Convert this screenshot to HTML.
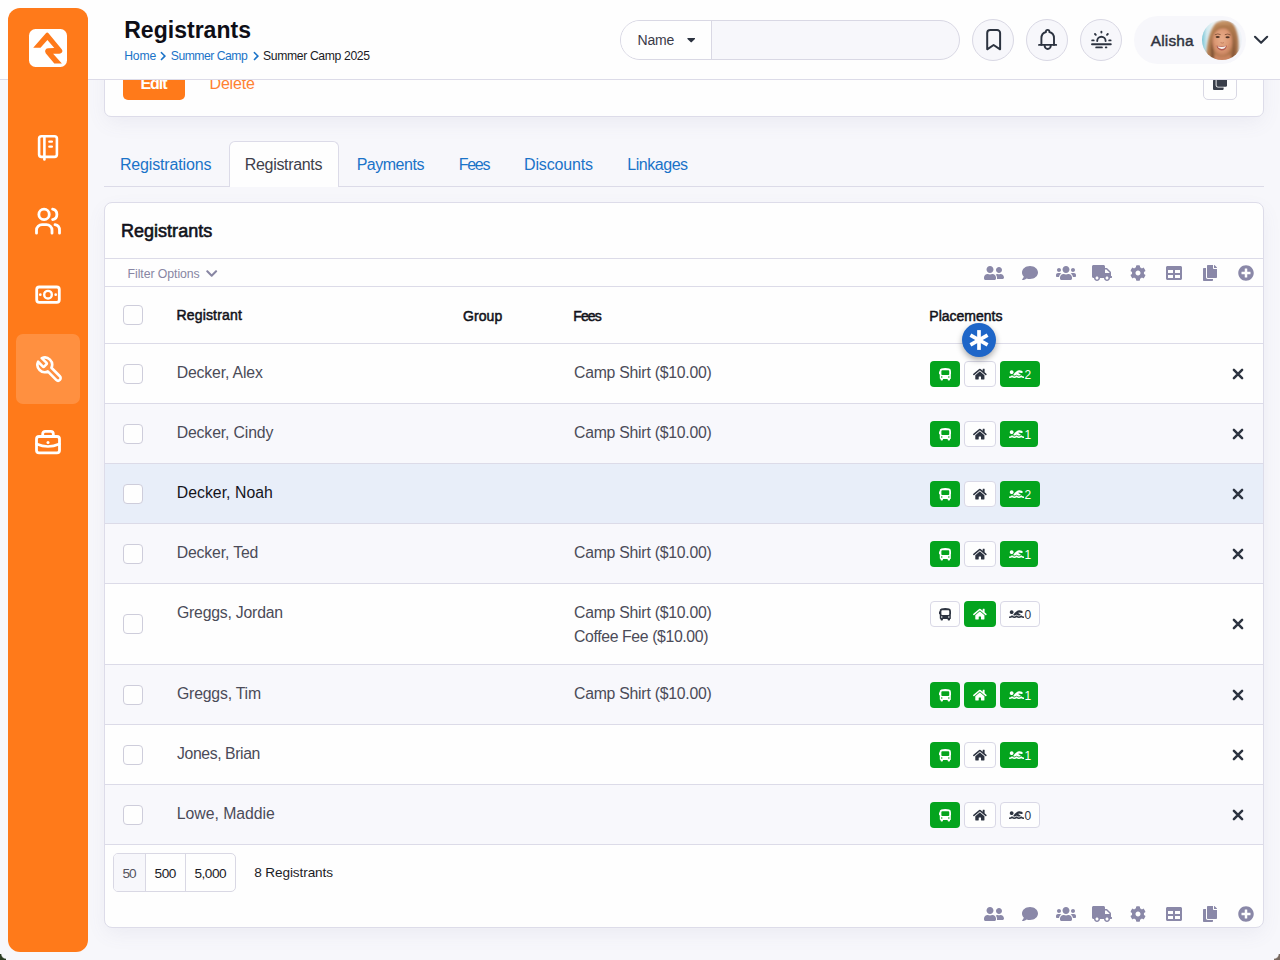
<!DOCTYPE html>
<html>
<head>
<meta charset="utf-8">
<title>Registrants</title>
<style>
*{box-sizing:border-box;margin:0;padding:0}
html,body{width:1280px;height:960px;overflow:hidden}
body{background:#f7f7fb;font-family:"Liberation Sans",sans-serif;color:#3b3b45;position:relative}
.abs{position:absolute;display:block}
.t{position:absolute;white-space:nowrap}
.hl{position:absolute;left:105px;width:1158px;height:1px;background:#dcdbe8}
.cb{position:absolute;left:123px;width:20px;height:20px;border:1.5px solid #cecddb;border-radius:4px;background:#fefefe}
.pb{position:absolute;height:26px;border-radius:4px}
.pb.g{background:#04a41e}
.pb.w{background:#fefefe;border:1px solid #d9d8e6}
.circ{position:absolute;width:42px;height:42px;border-radius:50%;background:#f7f7fb;border:1px solid #d9d8e4}
</style>
</head>
<body>
<div class="abs" style="left:104px;top:40px;width:1160px;height:77px;background:#fefefe;border:1px solid #dddce9;border-radius:7px;box-shadow:0 7px 20px -2px rgba(100,100,150,.085)"></div>
<div class="abs" style="left:123px;top:62px;width:62px;height:38px;background:#ff7a1a;border-radius:5px"></div>
<div class="abs" style="left:0;top:80px;width:1280px;height:40px;overflow:hidden"><div class="t" style="left:140.40px;top:-4px;font-size:16px;line-height:16px;color:#fff;letter-spacing:-1.030px;font-weight:700">Edit</div>
<div class="t" style="left:209.50px;top:-4px;font-size:16px;line-height:16px;color:#ff8132;letter-spacing:-0.170px">Delete</div></div>
<div class="abs" style="left:1203px;top:66px;width:34px;height:34px;background:#fefefe;border:1px solid #d9d8e4;border-radius:5px"></div>
<svg class="abs" style="left:1213.00px;top:75.80px" width="14.20" height="14.20" viewBox="0 0 512 512"><path fill="#3a3f4a" d="M464 0c26.510 0 48 21.490 48 48v288c0 26.510-21.490 48-48 48H176c-26.510 0-48-21.490-48-48V48c0-26.510 21.490-48 48-48h288M176 416c-44.112 0-80-35.888-80-80V128H48c-26.510 0-48 21.490-48 48v288c0 26.510 21.490 48 48 48h288c26.510 0 48-21.490 48-48v-48H176z"/></svg>
<div class="abs" style="left:0;top:0;width:1280px;height:79px;background:#fefefe"></div>
<div class="abs" style="left:0;top:79px;width:1280px;height:1px;background:#dcdbe8"></div>
<svg class="abs" style="left:160.21px;top:50.80px" width="6.38" height="10.20" viewBox="0 0 320 512"><path fill="#1a73c8" d="M285.476 272.971L91.132 467.314c-9.373 9.373-24.569 9.373-33.941 0l-22.667-22.667c-9.357-9.357-9.375-24.522-.04-33.901L188.505 256 34.484 101.255c-9.335-9.379-9.317-24.544.04-33.901l22.667-22.667c9.373-9.373 24.569-9.373 33.941 0L285.475 239.030c9.373 9.372 9.373 24.568.001 33.941z"/></svg>
<svg class="abs" style="left:252.71px;top:50.80px" width="6.38" height="10.20" viewBox="0 0 320 512"><path fill="#1a73c8" d="M285.476 272.971L91.132 467.314c-9.373 9.373-24.569 9.373-33.941 0l-22.667-22.667c-9.357-9.357-9.375-24.522-.04-33.901L188.505 256 34.484 101.255c-9.335-9.379-9.317-24.544.04-33.901l22.667-22.667c9.373-9.373 24.569-9.373 33.941 0L285.475 239.030c9.373 9.372 9.373 24.568.001 33.941z"/></svg>
<div class="abs" style="left:620px;top:20px;width:340px;height:40px;border-radius:20px;background:#f7f7fb;border:1px solid #d9d8e4;overflow:hidden"><div style="position:absolute;left:0;top:0;width:91px;height:38px;background:#fefefe;border-right:1px solid #d9d8e4"></div></div>
<svg class="abs" style="left:686.58px;top:33.45px" width="8.44" height="13.50" viewBox="0 0 320 512"><path fill="#2c3340" d="M31.3 192h257.3c17.800 0 26.700 21.500 14.100 34.100L174.100 354.800c-7.800 7.800-20.500 7.800-28.300 0L17.200 226.100C4.600 213.500 13.500 192 31.300 192z"/></svg>
<div class="circ" style="left:972px;top:19px"></div>
<div class="circ" style="left:1026px;top:19px"></div>
<div class="circ" style="left:1080px;top:19px"></div>
<svg class="abs" style="left:973px;top:20px" width="40" height="40" viewBox="973 20 40 40"><path fill="none" stroke="#2c3340" stroke-linecap="round" stroke-linejoin="round" stroke-width="2" d="M987.200,49.300V33a3,3 0 0 1 3,-3h6.900a3,3 0 0 1 3,3V49.300L993.600,45.000Z"/></svg>
<svg class="abs" style="left:1027px;top:20px" width="40" height="40" viewBox="1027 20 40 40"><g fill="none" stroke="#2c3340" stroke-linecap="round" stroke-linejoin="round" stroke-width="1.9"><path d="M1039.000,44.900H1056.200"/><path d="M1041.4,44.900V38.300C1041.400,35.000 1043.100,32.700 1045.900,32.000C1045.800,30.600 1046.500,29.900 1047.650,29.900C1048.800,29.900 1049.500,30.600 1049.400,32.000C1052.300,32.700 1054.000,35.000 1054.000,38.300V44.900"/><path d="M1044.600,45.400a3.100,3.600 0 0 0 6.200,0"/></g></svg>
<svg class="abs" style="left:1081px;top:20px" width="40" height="40" viewBox="1081 20 40 40"><g fill="none" stroke="#2c3340" stroke-linecap="round" stroke-linejoin="round" stroke-width="1.9"><path d="M1092.000,44.300H1110.800"/><path d="M1096.200,47.400H1101.900M1105.800,47.400H1106.400"/><path d="M1097.200,41.000a4.200,4.200 0 0 1 8.400,0"/><path d="M1101.400,31.600V32.600M1095.000,34.000L1095.800,34.800M1107.800,34.000L1107.000,34.800M1092.200,40.400H1093.700M1109.200,40.400H1110.600"/></g></svg>
<div class="abs" style="left:1134px;top:16px;width:111.500px;height:48px;border-radius:24px;background:#f7f7fb"></div>
<svg class="abs" style="left:1202px;top:20px" width="40" height="40" viewBox="0 0 40 40">
<defs><clipPath id="avc"><circle cx="20" cy="20" r="20"/></clipPath>
<filter id="b1" x="-30%" y="-30%" width="160%" height="160%"><feGaussianBlur stdDeviation="0.9"/></filter>
<filter id="b2" x="-30%" y="-30%" width="160%" height="160%"><feGaussianBlur stdDeviation="0.45"/></filter>
<linearGradient id="bgav" x1="0" x2="1"><stop offset="0" stop-color="#7cc6d6"/><stop offset=".12" stop-color="#cfe8ee"/><stop offset=".3" stop-color="#eef4f6"/><stop offset="1" stop-color="#eef3f8"/></linearGradient>
<radialGradient id="skin" cx=".48" cy=".42" r=".62"><stop offset="0" stop-color="#e8ad8b"/><stop offset=".6" stop-color="#dc9873"/><stop offset="1" stop-color="#c27c58"/></radialGradient>
<linearGradient id="hair" x1="0" x2="1" y1="0" y2="1"><stop offset="0" stop-color="#c08e60"/><stop offset=".5" stop-color="#b07a4e"/><stop offset="1" stop-color="#a06a43"/></linearGradient>
</defs>
<g clip-path="url(#avc)">
<rect width="40" height="40" fill="url(#bgav)"/>
<g filter="url(#b1)">
<path d="M4,42 C4,30 6,12 13,4 C17,0 26,-1 30,3 C35,8 37,18 36.500,28 C36.300,33 35,38 33,42 Z" fill="url(#hair)"/>
<path d="M9.500,40 C8,30 9,18 12,11 C10.500,20 11,32 13,40Z" fill="#7d4f33"/>
<path d="M32,38 C33.500,30 33,18 30,11 C32,20 31.500,30 29.500,38Z" fill="#7d4f33"/>
<ellipse cx="20.300" cy="21.500" rx="10" ry="14" fill="url(#skin)"/>
<path d="M11,42 L13,34 Q20,39 28,34 L30,42Z" fill="#c9835f"/>
<path d="M10,19 C10.500,9 16,6 21.500,6.500 C27,6.500 31,11 31,20 C29.500,12 26,8.800 22.500,8.500 C17,8.000 12,11 10,19Z" fill="#aa7449"/>
<path d="M14,4.500 C18,1.500 26,1.500 29.500,5 C25,3.500 18,3.300 14,4.500Z" fill="#cf9f70"/>
</g>
<g filter="url(#b2)">
<path d="M14.400,25.600 Q19.800,27.600 25.000,25.400 Q24.000,30.300 19.600,30.500 Q15.600,30.300 14.400,25.600Z" fill="#b0584f"/>
<path d="M15.400,26.200 Q19.800,27.800 24.000,26.000 Q23.000,28.900 19.700,29.000 Q16.500,28.900 15.400,26.200Z" fill="#f7f1ee"/>
<ellipse cx="15.700" cy="17.000" rx="2.100" ry="1.000" fill="#4f3225"/>
<ellipse cx="25.600" cy="17.200" rx="2.100" ry="1.000" fill="#4f3225"/>
<path d="M12.800,14.800 Q15.800,13.200 18.600,14.600" stroke="#81523a" stroke-width=".9" fill="none"/>
<path d="M22.800,14.700 Q25.800,13.300 28.600,15.000" stroke="#81523a" stroke-width=".9" fill="none"/>
<path d="M18.600,22.600 Q20.300,23.600 22.000,22.600" stroke="#c07d5c" stroke-width=".9" fill="none"/>
<path d="M12.300,23.500 Q13.300,26.500 14.300,28.000" stroke="#cf8a68" stroke-width=".7" fill="none"/>
<path d="M27.600,23.500 Q26.800,26.500 25.600,28.000" stroke="#cf8a68" stroke-width=".7" fill="none"/>
</g>
</g></svg>
<svg class="abs" style="left:1250px;top:30px" width="22" height="20" viewBox="1250 30 22 20"><path fill="none" stroke="#2c3340" stroke-linecap="round" stroke-linejoin="round" stroke-width="2.1" d="M1255.000,36.800L1261.100,42.800L1267.200,36.800"/></svg>
<div class="abs" style="left:8px;top:8px;width:80px;height:944px;background:#ff7a1a;border-radius:12px"></div>
<div class="abs" style="left:29px;top:29px;width:38px;height:38px;background:#fff;border-radius:6.5px"></div>
<svg class="abs" style="left:29px;top:29px" width="38" height="38" viewBox="0 0 38 38"><path fill="#ff7a1a" d="M16.9,4.3 Q18.2,2.8 19.5,4.3 L32.7,20.3 Q34.3,22.6 32.3,24.1 Q31.4,24.7 30.2,24.7 L24.1,24.7 L32.9,34.4 L25.3,34.4 L16.7,24.3 Q15.2,22 17,20.1 Q17.9,19.3 19.2,19.3 L25.3,19.1 L18.4,10.9 L11.5,18.7 L4.2,18.7 Z"/></svg>
<div class="abs" style="left:16px;top:334px;width:64px;height:70px;background:rgba(255,255,255,.17);border-radius:7px"></div>
<svg class="abs" style="left:28px;top:127px" width="40" height="40" viewBox="28 127 40 40"><g fill="none" stroke="#fff" stroke-linecap="round" stroke-linejoin="round" stroke-width="2.6"><rect x="39.1" y="136.2" width="17.8" height="20.7" rx="2.4"/><path d="M44.4,136.4V159.4"/><path d="M49.3,141.7H51.9M49.3,146.7H51.9" stroke-width="2.3"/></g></svg>
<svg class="abs" style="left:28px;top:200px" width="40" height="40" viewBox="28 200 40 40"><g fill="none" stroke="#fff" stroke-linecap="round" stroke-linejoin="round" stroke-width="2.8"><circle cx="44.05" cy="214.4" r="5.2"/><path d="M52.6,209.2a5.3,5.3 0 0 1 0,10.4"/><path d="M36.5,233.2v-2.9a5.6,5.6 0 0 1 5.6,-5.6h4.3a5.6,5.6 0 0 1 5.6,5.600v2.900"/><path d="M55.000,224.700a5.600,5.600 0 0 1 4.500,5.500v3.000"/></g></svg>
<svg class="abs" style="left:28px;top:275px" width="40" height="40" viewBox="28 275 40 40"><g fill="none" stroke="#fff" stroke-linecap="round" stroke-linejoin="round" stroke-width="2.8"><rect x="36.7" y="287" width="22.6" height="15.3" rx="2.6"/><circle cx="48" cy="294.65" r="3.8" stroke-width="2.4"/></g><circle cx="40.3" cy="294.65" r="1.35" fill="#fff"/><circle cx="55.7" cy="294.65" r="1.35" fill="#fff"/></svg>
<svg class="abs" style="left:34.5px;top:354.8px" width="29.3" height="29.3" viewBox="0 0 24 24"><g transform="translate(24,0) scale(-1,1)"><path fill="none" stroke="#fff" stroke-linecap="round" stroke-linejoin="round" stroke-width="2.15" d="M14.7 6.3a1 1 0 0 0 0 1.4l1.6 1.6a1 1 0 0 0 1.4 0l3.770-3.770a6 6 0 0 1-7.940 7.940l-6.910 6.910a2.120 2.120 0 0 1-3-3l6.910-6.910a6 6 0 0 1 7.940-7.940l-3.760 3.760z"/></g></svg>
<svg class="abs" style="left:28px;top:422px" width="40" height="40" viewBox="28 422 40 40"><g fill="none" stroke="#fff" stroke-linecap="round" stroke-linejoin="round" stroke-width="2.8"><rect x="36.5" y="436.5" width="23" height="16.4" rx="2.6"/><path d="M42.700,436.500v-2.600a2.600,2.600 0 0 1 2.600,-2.600h5.400a2.600,2.600 0 0 1 2.600,2.600v2.600"/><path d="M36.600,444.000q11.400,5.000 22.800,0" stroke-width="2.5"/></g><circle cx="48" cy="442.6" r="1.5" fill="#fff"/></svg>
<div class="abs" style="left:104px;top:186px;width:1160px;height:1px;background:#dcdbe8"></div>
<div class="abs" style="left:229px;top:141px;width:110px;height:46px;background:#fefefe;border:1px solid #dcdbe8;border-bottom:none;border-radius:6px 6px 0 0"></div>
<div class="abs" style="left:104px;top:202px;width:1160px;height:726px;background:#fefefe;border:1px solid #dddce9;border-radius:8px;box-shadow:0 7px 20px -2px rgba(100,100,150,.085)"></div>
<div class="abs" style="left:105px;top:404px;width:1158px;height:59px;background:#f8f8fc"></div>
<div class="abs" style="left:105px;top:464px;width:1158px;height:59px;background:#e8eef9"></div>
<div class="abs" style="left:105px;top:524px;width:1158px;height:59px;background:#f8f8fc"></div>
<div class="abs" style="left:105px;top:665px;width:1158px;height:59px;background:#f8f8fc"></div>
<div class="abs" style="left:105px;top:785px;width:1158px;height:59px;background:#f8f8fc"></div>
<div class="hl" style="top:258px"></div>
<div class="hl" style="top:286px"></div>
<div class="hl" style="top:343px"></div>
<div class="hl" style="top:403px"></div>
<div class="hl" style="top:463px"></div>
<div class="hl" style="top:523px"></div>
<div class="hl" style="top:583px"></div>
<div class="hl" style="top:664px"></div>
<div class="hl" style="top:724px"></div>
<div class="hl" style="top:784px"></div>
<div class="hl" style="top:844px"></div>
<svg class="abs" style="left:206.41px;top:267.20px" width="11.38" height="13.00" viewBox="0 0 448 512"><path fill="#8886a3" d="M207.029 381.476L12.686 187.132c-9.373-9.373-9.373-24.569 0-33.941l22.667-22.667c9.357-9.357 24.522-9.375 33.901-.04L224 284.505l154.745-154.021c9.379-9.335 24.544-9.317 33.901.04l22.667 22.667c9.373 9.373 9.373 24.569 0 33.941L240.971 381.476c-9.373 9.372-24.569 9.372-33.942 0z"/></svg>
<svg class="abs" style="left:984.00px;top:265.00px" width="20.00" height="16.00" viewBox="0 0 640 512"><path fill="#8a88a8" d="M192 256c61.9 0 112-50.1 112-112S253.9 32 192 32 80 82.1 80 144s50.1 112 112 112zm76.8 32h-8.3c-20.8 10-43.9 16-68.5 16s-47.6-6-68.5-16h-8.3C51.6 288 0 339.6 0 403.2V432c0 26.5 21.5 48 48 48h288c26.5 0 48-21.5 48-48v-28.8c0-63.6-51.6-115.2-115.2-115.2zM480 256c53 0 96-43 96-96s-43-96-96-96-96 43-96 96 43 96 96 96zm48 32h-3.8c-13.9 4.8-28.6 8-44.2 8s-30.3-3.2-44.2-8H432c-20.4 0-39.2 5.9-55.7 15.4 24.4 26.3 39.7 61.2 39.7 99.8v38.4c0 2.2-.5 4.3-.6 6.4H592c26.5 0 48-21.5 48-48 0-61.9-50.1-112-112-112z"/></svg>
<svg class="abs" style="left:1022.00px;top:265.00px" width="16.00" height="16.00" viewBox="0 0 512 512"><path fill="#8a88a8" d="M256 32C114.6 32 0 125.1 0 240c0 49.6 21.4 95 57 130.7C44.5 421.1 2.7 466 2.2 466.5c-2.2 2.3-2.8 5.7-1.5 8.7S4.8 480 8 480c66.3 0 116-31.8 140.6-51.4 32.7 12.3 69 19.4 107.4 19.4 141.4 0 256-93.1 256-208S397.4 32 256 32z"/></svg>
<svg class="abs" style="left:1056.00px;top:265.00px" width="20.00" height="16.00" viewBox="0 0 640 512"><path fill="#8a88a8" d="M96 224c35.3 0 64-28.7 64-64s-28.7-64-64-64-64 28.7-64 64 28.7 64 64 64zm448 0c35.3 0 64-28.7 64-64s-28.7-64-64-64-64 28.7-64 64 28.7 64 64 64zm32 32h-64c-17.6 0-33.5 7.1-45.1 18.6 40.3 22.1 68.9 62 75.1 109.4h66c17.7 0 32-14.3 32-32v-32c0-35.3-28.7-64-64-64zm-256 0c61.9 0 112-50.1 112-112S381.9 32 320 32 208 82.1 208 144s50.1 112 112 112zm76.8 32h-8.3c-20.8 10-43.900 16-68.500 16s-47.600-6-68.500-16h-8.300C179.600 288 128 339.600 128 403.200V432c0 26.500 21.500 48 48 48h288c26.500 0 48-21.500 48-48v-28.800c0-63.600-51.600-115.200-115.200-115.200zm-223.700-13.400C161.500 263.100 145.600 256 128 256H64c-35.300 0-64 28.700-64 64v32c0 17.700 14.300 32 32 32h65.900c6.300-47.400 34.900-87.300 75.200-109.400z"/></svg>
<svg class="abs" style="left:1092.00px;top:265.00px" width="20.00" height="16.00" viewBox="0 0 640 512"><path fill="#8a88a8" d="M624 352h-16V243.900c0-12.700-5.100-24.900-14.100-33.900L494 110.100c-9-9-21.200-14.100-33.900-14.100H416V48c0-26.500-21.500-48-48-48H48C21.500 0 0 21.500 0 48v320c0 26.500 21.500 48 48 48h16c0 53 43 96 96 96s96-43 96-96h128c0 53 43 96 96 96s96-43 96-96h48c8.800 0 16-7.200 16-16v-32c0-8.800-7.200-16-16-16zM160 464c-26.500 0-48-21.500-48-48s21.500-48 48-48 48 21.500 48 48-21.500 48-48 48zm320 0c-26.500 0-48-21.500-48-48s21.500-48 48-48 48 21.500 48 48-21.500 48-48 48zm80-208H416V144h44.100l99.900 99.900V256z"/></svg>
<svg class="abs" style="left:1130.00px;top:265.00px" width="16.00" height="16.00" viewBox="0 0 512 512"><path fill="#8a88a8" d="M487.4 315.7l-42.600-24.600c4.300-23.200 4.300-47 0-70.200l42.600-24.600c4.900-2.800 7.100-8.600 5.500-14-11.100-35.600-30-67.800-54.700-94.600-3.800-4.100-10-5.100-14.800-2.300L380.800 110c-17.900-15.400-38.500-27.300-60.800-35.100V25.800c0-5.600-3.900-10.500-9.400-11.700-36.700-8.200-74.300-7.800-109.200 0-5.500 1.200-9.400 6.100-9.400 11.700V75c-22.200 7.900-42.800 19.800-60.800 35.100L88.700 85.500c-4.900-2.800-11-1.900-14.800 2.300-24.700 26.700-43.600 58.900-54.700 94.600-1.700 5.400.6 11.200 5.500 14L67.300 221c-4.300 23.200-4.300 47 0 70.200l-42.600 24.600c-4.900 2.800-7.100 8.600-5.500 14 11.100 35.600 30 67.800 54.700 94.600 3.800 4.100 10 5.100 14.800 2.300l42.600-24.600c17.900 15.400 38.500 27.300 60.800 35.100v49.200c0 5.600 3.900 10.500 9.400 11.700 36.700 8.200 74.300 7.800 109.200 0 5.500-1.200 9.400-6.100 9.400-11.700v-49.200c22.200-7.900 42.800-19.800 60.800-35.100l42.600 24.600c4.900 2.800 11 1.900 14.800-2.300 24.700-26.700 43.600-58.900 54.700-94.600 1.500-5.500-.7-11.300-5.600-14.100zM256 336c-44.100 0-80-35.900-80-80s35.900-80 80-80 80 35.900 80 80-35.900 80-80 80z"/></svg>
<svg class="abs" style="left:1166.00px;top:265.00px" width="16.00" height="16.00" viewBox="0 0 512 512"><path fill="#8a88a8" d="M464 32H48C21.49 32 0 53.49 0 80v352c0 26.51 21.49 48 48 48h416c26.51 0 48-21.49 48-48V80c0-26.510-21.490-48-48-48zM224 416H64v-96h160v96zm0-160H64v-96h160v96zm224 160H288v-96h160v96zm0-160H288v-96h160v96z"/></svg>
<svg class="abs" style="left:1203.00px;top:265.00px" width="14.00" height="16.00" viewBox="0 0 448 512"><path fill="#8a88a8" d="M320 448v40c0 13.255-10.745 24-24 24H24c-13.255 0-24-10.745-24-24V120c0-13.255 10.745-24 24-24h72v296c0 30.879 25.121 56 56 56h168zm0-344V0H152c-13.255 0-24 10.745-24 24v368c0 13.255 10.745 24 24 24h272c13.255 0 24-10.745 24-24V128H344c-13.200 0-24-10.800-24-24zm120.971-31.029L375.029 7.029A24 24 0 0 0 358.059 0H352v96h96v-6.059a24 24 0 0 0-7.029-16.970z"/></svg>
<svg class="abs" style="left:1238.00px;top:265.00px" width="16.00" height="16.00" viewBox="0 0 512 512"><path fill="#8a88a8" d="M256 8C119 8 8 119 8 256s111 248 248 248 248-111 248-248S393 8 256 8zm144 276c0 6.600-5.400 12-12 12h-92v92c0 6.600-5.400 12-12 12h-56c-6.600 0-12-5.400-12-12v-92h-92c-6.600 0-12-5.400-12-12v-56c0-6.600 5.400-12 12-12h92v-92c0-6.600 5.400-12 12-12h56c6.600 0 12 5.400 12 12v92h92c6.600 0 12 5.400 12 12v56z"/></svg>
<svg class="abs" style="left:984.00px;top:906.00px" width="20.00" height="16.00" viewBox="0 0 640 512"><path fill="#8a88a8" d="M192 256c61.9 0 112-50.1 112-112S253.9 32 192 32 80 82.1 80 144s50.1 112 112 112zm76.8 32h-8.3c-20.8 10-43.9 16-68.5 16s-47.6-6-68.5-16h-8.3C51.6 288 0 339.6 0 403.2V432c0 26.5 21.5 48 48 48h288c26.5 0 48-21.5 48-48v-28.8c0-63.6-51.6-115.2-115.2-115.2zM480 256c53 0 96-43 96-96s-43-96-96-96-96 43-96 96 43 96 96 96zm48 32h-3.8c-13.9 4.8-28.6 8-44.2 8s-30.3-3.2-44.2-8H432c-20.4 0-39.2 5.9-55.7 15.4 24.4 26.3 39.7 61.2 39.7 99.8v38.4c0 2.2-.5 4.3-.6 6.4H592c26.5 0 48-21.5 48-48 0-61.9-50.1-112-112-112z"/></svg>
<svg class="abs" style="left:1022.00px;top:906.00px" width="16.00" height="16.00" viewBox="0 0 512 512"><path fill="#8a88a8" d="M256 32C114.6 32 0 125.1 0 240c0 49.6 21.4 95 57 130.7C44.5 421.1 2.7 466 2.2 466.5c-2.2 2.3-2.8 5.7-1.5 8.7S4.8 480 8 480c66.3 0 116-31.8 140.6-51.4 32.7 12.3 69 19.4 107.4 19.4 141.4 0 256-93.1 256-208S397.4 32 256 32z"/></svg>
<svg class="abs" style="left:1056.00px;top:906.00px" width="20.00" height="16.00" viewBox="0 0 640 512"><path fill="#8a88a8" d="M96 224c35.3 0 64-28.7 64-64s-28.7-64-64-64-64 28.7-64 64 28.7 64 64 64zm448 0c35.3 0 64-28.7 64-64s-28.7-64-64-64-64 28.7-64 64 28.7 64 64 64zm32 32h-64c-17.6 0-33.5 7.1-45.1 18.6 40.3 22.1 68.9 62 75.1 109.4h66c17.7 0 32-14.3 32-32v-32c0-35.3-28.7-64-64-64zm-256 0c61.9 0 112-50.1 112-112S381.9 32 320 32 208 82.1 208 144s50.1 112 112 112zm76.8 32h-8.3c-20.8 10-43.900 16-68.500 16s-47.600-6-68.500-16h-8.300C179.600 288 128 339.600 128 403.200V432c0 26.500 21.500 48 48 48h288c26.500 0 48-21.500 48-48v-28.800c0-63.600-51.600-115.200-115.200-115.200zm-223.700-13.400C161.500 263.100 145.600 256 128 256H64c-35.300 0-64 28.700-64 64v32c0 17.700 14.300 32 32 32h65.900c6.300-47.400 34.900-87.300 75.200-109.400z"/></svg>
<svg class="abs" style="left:1092.00px;top:906.00px" width="20.00" height="16.00" viewBox="0 0 640 512"><path fill="#8a88a8" d="M624 352h-16V243.900c0-12.700-5.100-24.900-14.100-33.900L494 110.100c-9-9-21.200-14.100-33.900-14.100H416V48c0-26.500-21.500-48-48-48H48C21.500 0 0 21.500 0 48v320c0 26.500 21.500 48 48 48h16c0 53 43 96 96 96s96-43 96-96h128c0 53 43 96 96 96s96-43 96-96h48c8.800 0 16-7.200 16-16v-32c0-8.800-7.200-16-16-16zM160 464c-26.500 0-48-21.500-48-48s21.500-48 48-48 48 21.500 48 48-21.500 48-48 48zm320 0c-26.500 0-48-21.500-48-48s21.500-48 48-48 48 21.500 48 48-21.500 48-48 48zm80-208H416V144h44.100l99.900 99.900V256z"/></svg>
<svg class="abs" style="left:1130.00px;top:906.00px" width="16.00" height="16.00" viewBox="0 0 512 512"><path fill="#8a88a8" d="M487.4 315.7l-42.600-24.600c4.300-23.200 4.300-47 0-70.200l42.600-24.600c4.900-2.800 7.100-8.600 5.500-14-11.100-35.600-30-67.800-54.700-94.600-3.800-4.100-10-5.100-14.800-2.300L380.800 110c-17.900-15.400-38.500-27.300-60.800-35.100V25.800c0-5.600-3.900-10.500-9.400-11.700-36.700-8.200-74.300-7.800-109.200 0-5.500 1.200-9.400 6.100-9.400 11.700V75c-22.200 7.900-42.800 19.800-60.800 35.100L88.700 85.500c-4.900-2.800-11-1.900-14.800 2.300-24.700 26.700-43.600 58.900-54.700 94.600-1.700 5.400.6 11.200 5.500 14L67.300 221c-4.300 23.200-4.300 47 0 70.200l-42.600 24.600c-4.900 2.800-7.100 8.600-5.500 14 11.100 35.600 30 67.800 54.700 94.600 3.800 4.100 10 5.100 14.800 2.300l42.600-24.600c17.900 15.400 38.500 27.300 60.800 35.100v49.200c0 5.600 3.900 10.500 9.400 11.700 36.700 8.200 74.300 7.800 109.200 0 5.500-1.200 9.400-6.100 9.400-11.700v-49.200c22.200-7.900 42.800-19.800 60.800-35.100l42.600 24.600c4.900 2.800 11 1.900 14.800-2.300 24.700-26.700 43.600-58.900 54.700-94.600 1.500-5.500-.7-11.300-5.600-14.100zM256 336c-44.100 0-80-35.900-80-80s35.900-80 80-80 80 35.900 80 80-35.900 80-80 80z"/></svg>
<svg class="abs" style="left:1166.00px;top:906.00px" width="16.00" height="16.00" viewBox="0 0 512 512"><path fill="#8a88a8" d="M464 32H48C21.49 32 0 53.49 0 80v352c0 26.51 21.49 48 48 48h416c26.51 0 48-21.49 48-48V80c0-26.510-21.490-48-48-48zM224 416H64v-96h160v96zm0-160H64v-96h160v96zm224 160H288v-96h160v96zm0-160H288v-96h160v96z"/></svg>
<svg class="abs" style="left:1203.00px;top:906.00px" width="14.00" height="16.00" viewBox="0 0 448 512"><path fill="#8a88a8" d="M320 448v40c0 13.255-10.745 24-24 24H24c-13.255 0-24-10.745-24-24V120c0-13.255 10.745-24 24-24h72v296c0 30.879 25.121 56 56 56h168zm0-344V0H152c-13.255 0-24 10.745-24 24v368c0 13.255 10.745 24 24 24h272c13.255 0 24-10.745 24-24V128H344c-13.200 0-24-10.800-24-24zm120.971-31.029L375.029 7.029A24 24 0 0 0 358.059 0H352v96h96v-6.059a24 24 0 0 0-7.029-16.970z"/></svg>
<svg class="abs" style="left:1238.00px;top:906.00px" width="16.00" height="16.00" viewBox="0 0 512 512"><path fill="#8a88a8" d="M256 8C119 8 8 119 8 256s111 248 248 248 248-111 248-248S393 8 256 8zm144 276c0 6.600-5.400 12-12 12h-92v92c0 6.600-5.400 12-12 12h-56c-6.600 0-12-5.400-12-12v-92h-92c-6.600 0-12-5.400-12-12v-56c0-6.600 5.400-12 12-12h92v-92c0-6.600 5.400-12 12-12h56c6.600 0 12 5.400 12 12v92h92c6.600 0 12 5.400 12 12v56z"/></svg>
<div class="cb" style="top:305px"></div>
<div class="cb" style="top:363.7px"></div>
<svg class="abs" style="left:1231px;top:366.7px" width="14" height="14" viewBox="0 0 14 14"><path d="M2.900,2.900L11.100,11.100M11.100,2.900L2.900,11.100" stroke="#2c3340" stroke-width="2.500" stroke-linecap="round" fill="none"/></svg>
<div class="pb g" style="left:930px;top:361px;width:30px"></div>
<svg class="abs" style="left:938.70px;top:368.30px" width="12.60" height="12.60" viewBox="0 0 512 512"><path fill="#fff" d="M488 128h-8V80c0-44.8-99.2-80-224-80S32 35.2 32 80v48h-8c-13.25 0-24 10.74-24 24v80c0 13.25 10.75 24 24 24h8v160c0 17.67 14.33 32 32 32v32c0 17.67 14.33 32 32 32h32c17.67 0 32-14.33 32-32v-32h192v32c0 17.67 14.33 32 32 32h32c17.67 0 32-14.33 32-32v-32h6.4c16 0 25.6-12.8 25.6-25.6V256h8c13.25 0 24-10.75 24-24v-80c0-13.26-10.75-24-24-24zM112 400c-17.67 0-32-14.33-32-32s14.33-32 32-32 32 14.33 32 32-14.33 32-32 32zm16-112c-17.67 0-32-14.33-32-32V128c0-17.67 14.33-32 32-32h256c17.67 0 32 14.33 32 32v128c0 17.67-14.33 32-32 32H128zm272 112c-17.67 0-32-14.33-32-32s14.33-32 32-32 32 14.33 32 32-14.33 32-32 32z"/></svg>
<div class="pb w" style="left:964px;top:361px;width:32px"></div>
<svg class="abs" style="left:973.24px;top:368.10px" width="13.72" height="12.20" viewBox="0 0 576 512"><path fill="#2c3340" d="M280.37 148.26L96 300.11V464a16 16 0 0 0 16 16l112.06-.29a16 16 0 0 0 15.92-16V368a16 16 0 0 1 16-16h64a16 16 0 0 1 16 16v95.64a16 16 0 0 0 16 16.05L464 480a16 16 0 0 0 16-16V300L295.67 148.26a12.19 12.19 0 0 0-15.3 0zM571.6 251.47L488 182.56V44.05a12 12 0 0 0-12-12h-56a12 12 0 0 0-12 12v72.61L318.47 43a48 48 0 0 0-61 0L4.34 251.47a12 12 0 0 0-1.6 16.9l25.5 31A12 12 0 0 0 45.15 301l235.22-193.74a12.19 12.19 0 0 1 15.3 0L530.9 301a12 12 0 0 0 16.9-1.6l25.5-31a12 12 0 0 0-1.7-16.93z"/></svg>
<div class="pb g" style="left:1000px;top:361px;width:40px"></div>
<svg class="abs" style="left:1009.08px;top:368.20px" width="15.25" height="12.20" viewBox="0 0 640 512"><path fill="#fff" d="M189.61 310.58c3.54 3.26 15.27 9.42 34.39 9.420s30.860-6.160 34.390-9.420c16.020-14.770 34.500-22.580 53.460-22.580h16.300c18.960 0 37.450 7.810 53.460 22.580 3.540 3.260 15.270 9.420 34.390 9.420s30.860-6.160 34.390-9.420c14.860-13.710 31.880-21.120 49.390-22.160l-112.840-80.600 18-12.860c3.640-2.580 8.280-3.520 12.620-2.610l100.350 21.530c25.910 5.530 51.440-10.970 57-36.880 5.550-25.920-10.950-51.440-36.880-57L437.680 98.470c-30.730-6.580-63.020.12-88.560 18.380l-80.020 57.170c-10.380 7.390-19.360 16.440-26.720 26.940L173.750 299c5.470 3.230 10.820 6.930 15.860 11.580zM624 352h-16c-26.040 0-45.800-8.420-56.090-17.900-8.900-8.210-19.660-14.100-31.770-14.100h-16.300c-12.110 0-22.870 5.890-31.770 14.100C461.800 343.580 442.040 352 416 352s-45.800-8.420-56.090-17.900c-8.900-8.210-19.660-14.100-31.770-14.100h-16.300c-12.110 0-22.870 5.890-31.770 14.100C269.800 343.580 250.040 352 224 352s-45.800-8.420-56.090-17.900c-8.900-8.210-19.660-14.100-31.770-14.100h-16.300c-12.110 0-22.870 5.890-31.770 14.100C77.800 343.580 58.040 352 32 352H16c-8.840 0-16 7.160-16 16v32c0 8.840 7.160 16 16 16h16c38.620 0 72.720-12.190 96-31.840 23.280 19.660 57.380 31.840 96 31.840s72.720-12.190 96-31.840c23.280 19.660 57.380 31.840 96 31.840s72.720-12.190 96-31.840c23.280 19.660 57.380 31.840 96 31.840h16c8.840 0 16-7.160 16-16v-32c0-8.840-7.160-16-16-16zm-512-96c44.180 0 80-35.820 80-80s-35.820-80-80-80-80 35.820-80 80 35.820 80 80 80z"/></svg>
<div class="t" style="left:1024.600px;top:368.6px;font-size:12px;line-height:12px;color:#fff;letter-spacing:-.3px">2</div>
<div class="cb" style="top:423.7px"></div>
<svg class="abs" style="left:1231px;top:426.7px" width="14" height="14" viewBox="0 0 14 14"><path d="M2.900,2.900L11.100,11.100M11.100,2.900L2.900,11.100" stroke="#2c3340" stroke-width="2.500" stroke-linecap="round" fill="none"/></svg>
<div class="pb g" style="left:930px;top:421px;width:30px"></div>
<svg class="abs" style="left:938.70px;top:428.30px" width="12.60" height="12.60" viewBox="0 0 512 512"><path fill="#fff" d="M488 128h-8V80c0-44.8-99.2-80-224-80S32 35.2 32 80v48h-8c-13.25 0-24 10.74-24 24v80c0 13.25 10.75 24 24 24h8v160c0 17.67 14.33 32 32 32v32c0 17.67 14.33 32 32 32h32c17.67 0 32-14.33 32-32v-32h192v32c0 17.67 14.33 32 32 32h32c17.67 0 32-14.33 32-32v-32h6.4c16 0 25.6-12.8 25.6-25.6V256h8c13.25 0 24-10.75 24-24v-80c0-13.26-10.75-24-24-24zM112 400c-17.67 0-32-14.33-32-32s14.33-32 32-32 32 14.33 32 32-14.33 32-32 32zm16-112c-17.67 0-32-14.33-32-32V128c0-17.67 14.33-32 32-32h256c17.67 0 32 14.33 32 32v128c0 17.67-14.33 32-32 32H128zm272 112c-17.67 0-32-14.33-32-32s14.33-32 32-32 32 14.33 32 32-14.33 32-32 32z"/></svg>
<div class="pb w" style="left:964px;top:421px;width:32px"></div>
<svg class="abs" style="left:973.24px;top:428.10px" width="13.72" height="12.20" viewBox="0 0 576 512"><path fill="#2c3340" d="M280.37 148.26L96 300.11V464a16 16 0 0 0 16 16l112.06-.29a16 16 0 0 0 15.92-16V368a16 16 0 0 1 16-16h64a16 16 0 0 1 16 16v95.64a16 16 0 0 0 16 16.05L464 480a16 16 0 0 0 16-16V300L295.67 148.26a12.19 12.19 0 0 0-15.3 0zM571.6 251.47L488 182.56V44.05a12 12 0 0 0-12-12h-56a12 12 0 0 0-12 12v72.61L318.47 43a48 48 0 0 0-61 0L4.34 251.47a12 12 0 0 0-1.6 16.9l25.5 31A12 12 0 0 0 45.15 301l235.22-193.74a12.19 12.19 0 0 1 15.3 0L530.9 301a12 12 0 0 0 16.9-1.6l25.5-31a12 12 0 0 0-1.7-16.93z"/></svg>
<div class="pb g" style="left:1000px;top:421px;width:38px"></div>
<svg class="abs" style="left:1009.08px;top:428.20px" width="15.25" height="12.20" viewBox="0 0 640 512"><path fill="#fff" d="M189.61 310.58c3.54 3.26 15.27 9.42 34.39 9.420s30.860-6.160 34.390-9.420c16.020-14.770 34.500-22.580 53.460-22.580h16.300c18.960 0 37.450 7.810 53.460 22.580 3.540 3.260 15.270 9.420 34.390 9.420s30.860-6.160 34.390-9.420c14.860-13.710 31.880-21.120 49.390-22.160l-112.840-80.600 18-12.860c3.640-2.580 8.280-3.520 12.620-2.610l100.350 21.530c25.910 5.530 51.440-10.970 57-36.880 5.550-25.920-10.950-51.440-36.880-57L437.680 98.470c-30.730-6.580-63.020.12-88.560 18.380l-80.020 57.170c-10.380 7.390-19.360 16.440-26.720 26.940L173.750 299c5.470 3.230 10.820 6.930 15.860 11.580zM624 352h-16c-26.040 0-45.800-8.420-56.090-17.900-8.900-8.210-19.660-14.100-31.770-14.100h-16.300c-12.110 0-22.870 5.890-31.770 14.100C461.800 343.580 442.040 352 416 352s-45.800-8.420-56.090-17.900c-8.900-8.210-19.660-14.100-31.770-14.100h-16.300c-12.110 0-22.870 5.890-31.770 14.100C269.800 343.580 250.040 352 224 352s-45.800-8.420-56.090-17.900c-8.900-8.210-19.660-14.100-31.770-14.100h-16.300c-12.110 0-22.870 5.890-31.770 14.100C77.800 343.580 58.040 352 32 352H16c-8.840 0-16 7.160-16 16v32c0 8.840 7.160 16 16 16h16c38.620 0 72.720-12.190 96-31.840 23.280 19.660 57.380 31.840 96 31.840s72.720-12.190 96-31.840c23.280 19.660 57.380 31.840 96 31.840s72.720-12.190 96-31.840c23.280 19.660 57.380 31.840 96 31.840h16c8.840 0 16-7.160 16-16v-32c0-8.840-7.160-16-16-16zm-512-96c44.180 0 80-35.820 80-80s-35.820-80-80-80-80 35.820-80 80 35.820 80 80 80z"/></svg>
<div class="t" style="left:1024.600px;top:428.6px;font-size:12px;line-height:12px;color:#fff;letter-spacing:-.3px">1</div>
<div class="cb" style="top:483.7px"></div>
<svg class="abs" style="left:1231px;top:486.7px" width="14" height="14" viewBox="0 0 14 14"><path d="M2.900,2.900L11.100,11.100M11.100,2.900L2.900,11.100" stroke="#2c3340" stroke-width="2.500" stroke-linecap="round" fill="none"/></svg>
<div class="pb g" style="left:930px;top:481px;width:30px"></div>
<svg class="abs" style="left:938.70px;top:488.30px" width="12.60" height="12.60" viewBox="0 0 512 512"><path fill="#fff" d="M488 128h-8V80c0-44.8-99.2-80-224-80S32 35.2 32 80v48h-8c-13.25 0-24 10.74-24 24v80c0 13.25 10.75 24 24 24h8v160c0 17.67 14.33 32 32 32v32c0 17.67 14.33 32 32 32h32c17.67 0 32-14.33 32-32v-32h192v32c0 17.67 14.33 32 32 32h32c17.67 0 32-14.33 32-32v-32h6.4c16 0 25.6-12.8 25.6-25.6V256h8c13.25 0 24-10.75 24-24v-80c0-13.26-10.75-24-24-24zM112 400c-17.67 0-32-14.33-32-32s14.33-32 32-32 32 14.33 32 32-14.33 32-32 32zm16-112c-17.67 0-32-14.33-32-32V128c0-17.67 14.33-32 32-32h256c17.67 0 32 14.33 32 32v128c0 17.67-14.33 32-32 32H128zm272 112c-17.67 0-32-14.33-32-32s14.33-32 32-32 32 14.33 32 32-14.33 32-32 32z"/></svg>
<div class="pb w" style="left:964px;top:481px;width:32px"></div>
<svg class="abs" style="left:973.24px;top:488.10px" width="13.72" height="12.20" viewBox="0 0 576 512"><path fill="#2c3340" d="M280.37 148.26L96 300.11V464a16 16 0 0 0 16 16l112.06-.29a16 16 0 0 0 15.92-16V368a16 16 0 0 1 16-16h64a16 16 0 0 1 16 16v95.64a16 16 0 0 0 16 16.05L464 480a16 16 0 0 0 16-16V300L295.67 148.26a12.19 12.19 0 0 0-15.3 0zM571.6 251.47L488 182.56V44.05a12 12 0 0 0-12-12h-56a12 12 0 0 0-12 12v72.61L318.47 43a48 48 0 0 0-61 0L4.34 251.47a12 12 0 0 0-1.6 16.9l25.5 31A12 12 0 0 0 45.15 301l235.22-193.74a12.19 12.19 0 0 1 15.3 0L530.9 301a12 12 0 0 0 16.9-1.6l25.5-31a12 12 0 0 0-1.7-16.93z"/></svg>
<div class="pb g" style="left:1000px;top:481px;width:40px"></div>
<svg class="abs" style="left:1009.08px;top:488.20px" width="15.25" height="12.20" viewBox="0 0 640 512"><path fill="#fff" d="M189.61 310.58c3.54 3.26 15.27 9.42 34.39 9.420s30.860-6.160 34.390-9.420c16.020-14.770 34.500-22.580 53.460-22.580h16.300c18.960 0 37.450 7.810 53.460 22.580 3.540 3.260 15.270 9.420 34.390 9.420s30.860-6.160 34.390-9.420c14.860-13.710 31.880-21.120 49.390-22.160l-112.840-80.600 18-12.860c3.640-2.580 8.280-3.520 12.620-2.610l100.350 21.530c25.910 5.530 51.440-10.970 57-36.880 5.550-25.920-10.950-51.440-36.880-57L437.680 98.470c-30.730-6.580-63.020.12-88.560 18.380l-80.020 57.170c-10.380 7.390-19.360 16.440-26.720 26.940L173.750 299c5.470 3.230 10.820 6.930 15.860 11.580zM624 352h-16c-26.040 0-45.800-8.420-56.090-17.900-8.900-8.210-19.660-14.100-31.770-14.100h-16.300c-12.110 0-22.870 5.890-31.770 14.100C461.800 343.580 442.040 352 416 352s-45.800-8.420-56.090-17.900c-8.900-8.210-19.660-14.100-31.770-14.100h-16.300c-12.110 0-22.870 5.890-31.770 14.100C269.800 343.580 250.040 352 224 352s-45.800-8.420-56.090-17.900c-8.900-8.210-19.660-14.100-31.770-14.100h-16.300c-12.110 0-22.870 5.890-31.770 14.100C77.800 343.580 58.040 352 32 352H16c-8.840 0-16 7.160-16 16v32c0 8.840 7.160 16 16 16h16c38.620 0 72.720-12.190 96-31.840 23.280 19.660 57.380 31.840 96 31.840s72.720-12.190 96-31.840c23.280 19.660 57.380 31.840 96 31.840s72.720-12.190 96-31.840c23.280 19.660 57.380 31.840 96 31.840h16c8.840 0 16-7.160 16-16v-32c0-8.840-7.160-16-16-16zm-512-96c44.180 0 80-35.820 80-80s-35.820-80-80-80-80 35.820-80 80 35.820 80 80 80z"/></svg>
<div class="t" style="left:1024.600px;top:488.6px;font-size:12px;line-height:12px;color:#fff;letter-spacing:-.3px">2</div>
<div class="cb" style="top:543.7px"></div>
<svg class="abs" style="left:1231px;top:546.7px" width="14" height="14" viewBox="0 0 14 14"><path d="M2.900,2.900L11.100,11.100M11.100,2.900L2.900,11.100" stroke="#2c3340" stroke-width="2.500" stroke-linecap="round" fill="none"/></svg>
<div class="pb g" style="left:930px;top:541px;width:30px"></div>
<svg class="abs" style="left:938.70px;top:548.30px" width="12.60" height="12.60" viewBox="0 0 512 512"><path fill="#fff" d="M488 128h-8V80c0-44.8-99.2-80-224-80S32 35.2 32 80v48h-8c-13.25 0-24 10.74-24 24v80c0 13.25 10.75 24 24 24h8v160c0 17.67 14.33 32 32 32v32c0 17.67 14.33 32 32 32h32c17.67 0 32-14.33 32-32v-32h192v32c0 17.67 14.33 32 32 32h32c17.67 0 32-14.33 32-32v-32h6.4c16 0 25.6-12.8 25.6-25.6V256h8c13.25 0 24-10.75 24-24v-80c0-13.26-10.75-24-24-24zM112 400c-17.67 0-32-14.33-32-32s14.33-32 32-32 32 14.33 32 32-14.33 32-32 32zm16-112c-17.67 0-32-14.33-32-32V128c0-17.67 14.33-32 32-32h256c17.67 0 32 14.33 32 32v128c0 17.67-14.33 32-32 32H128zm272 112c-17.67 0-32-14.33-32-32s14.33-32 32-32 32 14.33 32 32-14.33 32-32 32z"/></svg>
<div class="pb w" style="left:964px;top:541px;width:32px"></div>
<svg class="abs" style="left:973.24px;top:548.10px" width="13.72" height="12.20" viewBox="0 0 576 512"><path fill="#2c3340" d="M280.37 148.26L96 300.11V464a16 16 0 0 0 16 16l112.06-.29a16 16 0 0 0 15.92-16V368a16 16 0 0 1 16-16h64a16 16 0 0 1 16 16v95.64a16 16 0 0 0 16 16.05L464 480a16 16 0 0 0 16-16V300L295.67 148.26a12.19 12.19 0 0 0-15.3 0zM571.6 251.47L488 182.56V44.05a12 12 0 0 0-12-12h-56a12 12 0 0 0-12 12v72.61L318.47 43a48 48 0 0 0-61 0L4.34 251.47a12 12 0 0 0-1.6 16.9l25.5 31A12 12 0 0 0 45.15 301l235.22-193.74a12.19 12.19 0 0 1 15.3 0L530.9 301a12 12 0 0 0 16.9-1.6l25.5-31a12 12 0 0 0-1.7-16.93z"/></svg>
<div class="pb g" style="left:1000px;top:541px;width:38px"></div>
<svg class="abs" style="left:1009.08px;top:548.20px" width="15.25" height="12.20" viewBox="0 0 640 512"><path fill="#fff" d="M189.61 310.58c3.54 3.26 15.27 9.42 34.39 9.420s30.860-6.160 34.390-9.420c16.020-14.770 34.500-22.580 53.460-22.580h16.300c18.960 0 37.450 7.810 53.460 22.580 3.540 3.260 15.270 9.420 34.390 9.420s30.860-6.160 34.390-9.420c14.860-13.710 31.880-21.120 49.390-22.160l-112.840-80.600 18-12.860c3.640-2.580 8.280-3.520 12.620-2.610l100.350 21.530c25.910 5.530 51.440-10.970 57-36.880 5.550-25.920-10.950-51.440-36.880-57L437.680 98.470c-30.730-6.580-63.020.12-88.560 18.380l-80.020 57.170c-10.380 7.390-19.360 16.440-26.720 26.940L173.750 299c5.470 3.230 10.820 6.930 15.860 11.580zM624 352h-16c-26.040 0-45.800-8.420-56.090-17.900-8.900-8.210-19.660-14.100-31.770-14.100h-16.300c-12.110 0-22.870 5.890-31.770 14.100C461.800 343.580 442.040 352 416 352s-45.800-8.420-56.090-17.900c-8.900-8.210-19.660-14.100-31.770-14.100h-16.300c-12.110 0-22.870 5.890-31.770 14.100C269.800 343.580 250.040 352 224 352s-45.800-8.420-56.090-17.900c-8.900-8.210-19.660-14.100-31.770-14.100h-16.300c-12.110 0-22.870 5.890-31.770 14.100C77.800 343.580 58.040 352 32 352H16c-8.840 0-16 7.160-16 16v32c0 8.840 7.160 16 16 16h16c38.620 0 72.720-12.190 96-31.840 23.280 19.660 57.380 31.840 96 31.840s72.720-12.190 96-31.840c23.280 19.660 57.380 31.840 96 31.840s72.720-12.190 96-31.840c23.280 19.660 57.380 31.840 96 31.840h16c8.840 0 16-7.160 16-16v-32c0-8.840-7.160-16-16-16zm-512-96c44.180 0 80-35.820 80-80s-35.820-80-80-80-80 35.820-80 80 35.820 80 80 80z"/></svg>
<div class="t" style="left:1024.600px;top:548.6px;font-size:12px;line-height:12px;color:#fff;letter-spacing:-.3px">1</div>
<div class="cb" style="top:614.2px"></div>
<svg class="abs" style="left:1231px;top:617.2px" width="14" height="14" viewBox="0 0 14 14"><path d="M2.900,2.900L11.100,11.100M11.100,2.900L2.900,11.100" stroke="#2c3340" stroke-width="2.500" stroke-linecap="round" fill="none"/></svg>
<div class="pb w" style="left:930px;top:601px;width:30px"></div>
<svg class="abs" style="left:938.70px;top:608.30px" width="12.60" height="12.60" viewBox="0 0 512 512"><path fill="#2c3340" d="M488 128h-8V80c0-44.8-99.2-80-224-80S32 35.2 32 80v48h-8c-13.25 0-24 10.74-24 24v80c0 13.25 10.75 24 24 24h8v160c0 17.67 14.33 32 32 32v32c0 17.67 14.33 32 32 32h32c17.67 0 32-14.33 32-32v-32h192v32c0 17.67 14.33 32 32 32h32c17.67 0 32-14.33 32-32v-32h6.4c16 0 25.6-12.8 25.6-25.6V256h8c13.25 0 24-10.75 24-24v-80c0-13.26-10.75-24-24-24zM112 400c-17.67 0-32-14.33-32-32s14.33-32 32-32 32 14.33 32 32-14.33 32-32 32zm16-112c-17.67 0-32-14.33-32-32V128c0-17.67 14.33-32 32-32h256c17.67 0 32 14.33 32 32v128c0 17.67-14.33 32-32 32H128zm272 112c-17.67 0-32-14.33-32-32s14.33-32 32-32 32 14.33 32 32-14.33 32-32 32z"/></svg>
<div class="pb g" style="left:964px;top:601px;width:32px"></div>
<svg class="abs" style="left:973.24px;top:608.10px" width="13.72" height="12.20" viewBox="0 0 576 512"><path fill="#fff" d="M280.37 148.26L96 300.11V464a16 16 0 0 0 16 16l112.06-.29a16 16 0 0 0 15.92-16V368a16 16 0 0 1 16-16h64a16 16 0 0 1 16 16v95.64a16 16 0 0 0 16 16.05L464 480a16 16 0 0 0 16-16V300L295.67 148.26a12.19 12.19 0 0 0-15.3 0zM571.6 251.47L488 182.56V44.05a12 12 0 0 0-12-12h-56a12 12 0 0 0-12 12v72.61L318.47 43a48 48 0 0 0-61 0L4.34 251.47a12 12 0 0 0-1.6 16.9l25.5 31A12 12 0 0 0 45.15 301l235.22-193.74a12.19 12.19 0 0 1 15.3 0L530.9 301a12 12 0 0 0 16.9-1.6l25.5-31a12 12 0 0 0-1.7-16.93z"/></svg>
<div class="pb w" style="left:1000px;top:601px;width:40px"></div>
<svg class="abs" style="left:1009.08px;top:608.20px" width="15.25" height="12.20" viewBox="0 0 640 512"><path fill="#2c3340" d="M189.61 310.58c3.54 3.26 15.27 9.42 34.39 9.420s30.860-6.160 34.390-9.420c16.020-14.770 34.500-22.580 53.460-22.580h16.300c18.960 0 37.450 7.810 53.460 22.580 3.540 3.260 15.270 9.420 34.390 9.420s30.860-6.160 34.390-9.420c14.860-13.710 31.880-21.120 49.390-22.160l-112.840-80.600 18-12.860c3.640-2.580 8.280-3.520 12.620-2.610l100.350 21.530c25.910 5.530 51.440-10.970 57-36.880 5.550-25.920-10.950-51.440-36.880-57L437.680 98.470c-30.730-6.580-63.020.12-88.560 18.380l-80.020 57.170c-10.380 7.390-19.360 16.440-26.720 26.940L173.750 299c5.470 3.230 10.820 6.930 15.860 11.580zM624 352h-16c-26.040 0-45.800-8.420-56.090-17.900-8.900-8.210-19.660-14.100-31.770-14.100h-16.300c-12.110 0-22.870 5.890-31.770 14.100C461.800 343.580 442.040 352 416 352s-45.800-8.420-56.090-17.900c-8.900-8.210-19.660-14.100-31.770-14.100h-16.300c-12.110 0-22.870 5.890-31.770 14.100C269.800 343.580 250.040 352 224 352s-45.800-8.420-56.090-17.900c-8.900-8.210-19.660-14.100-31.770-14.100h-16.300c-12.110 0-22.870 5.890-31.770 14.100C77.800 343.580 58.040 352 32 352H16c-8.840 0-16 7.160-16 16v32c0 8.840 7.160 16 16 16h16c38.620 0 72.720-12.190 96-31.840 23.280 19.660 57.380 31.840 96 31.840s72.720-12.190 96-31.840c23.280 19.660 57.380 31.840 96 31.840s72.720-12.190 96-31.840c23.280 19.660 57.380 31.840 96 31.840h16c8.840 0 16-7.160 16-16v-32c0-8.840-7.160-16-16-16zm-512-96c44.180 0 80-35.820 80-80s-35.820-80-80-80-80 35.820-80 80 35.820 80 80 80z"/></svg>
<div class="t" style="left:1024.600px;top:608.6px;font-size:12px;line-height:12px;color:#2c3340;letter-spacing:-.3px">0</div>
<div class="cb" style="top:684.7px"></div>
<svg class="abs" style="left:1231px;top:687.7px" width="14" height="14" viewBox="0 0 14 14"><path d="M2.900,2.900L11.100,11.100M11.100,2.900L2.900,11.100" stroke="#2c3340" stroke-width="2.500" stroke-linecap="round" fill="none"/></svg>
<div class="pb g" style="left:930px;top:682px;width:30px"></div>
<svg class="abs" style="left:938.70px;top:689.30px" width="12.60" height="12.60" viewBox="0 0 512 512"><path fill="#fff" d="M488 128h-8V80c0-44.8-99.2-80-224-80S32 35.2 32 80v48h-8c-13.25 0-24 10.74-24 24v80c0 13.25 10.75 24 24 24h8v160c0 17.67 14.33 32 32 32v32c0 17.67 14.33 32 32 32h32c17.67 0 32-14.33 32-32v-32h192v32c0 17.67 14.33 32 32 32h32c17.67 0 32-14.33 32-32v-32h6.4c16 0 25.6-12.8 25.6-25.6V256h8c13.25 0 24-10.75 24-24v-80c0-13.26-10.75-24-24-24zM112 400c-17.67 0-32-14.33-32-32s14.33-32 32-32 32 14.33 32 32-14.33 32-32 32zm16-112c-17.67 0-32-14.33-32-32V128c0-17.67 14.33-32 32-32h256c17.67 0 32 14.33 32 32v128c0 17.67-14.33 32-32 32H128zm272 112c-17.67 0-32-14.33-32-32s14.33-32 32-32 32 14.33 32 32-14.33 32-32 32z"/></svg>
<div class="pb g" style="left:964px;top:682px;width:32px"></div>
<svg class="abs" style="left:973.24px;top:689.10px" width="13.72" height="12.20" viewBox="0 0 576 512"><path fill="#fff" d="M280.37 148.26L96 300.11V464a16 16 0 0 0 16 16l112.06-.29a16 16 0 0 0 15.92-16V368a16 16 0 0 1 16-16h64a16 16 0 0 1 16 16v95.64a16 16 0 0 0 16 16.05L464 480a16 16 0 0 0 16-16V300L295.67 148.26a12.19 12.19 0 0 0-15.3 0zM571.6 251.47L488 182.56V44.05a12 12 0 0 0-12-12h-56a12 12 0 0 0-12 12v72.61L318.47 43a48 48 0 0 0-61 0L4.34 251.47a12 12 0 0 0-1.6 16.9l25.5 31A12 12 0 0 0 45.15 301l235.22-193.74a12.19 12.19 0 0 1 15.3 0L530.9 301a12 12 0 0 0 16.9-1.6l25.5-31a12 12 0 0 0-1.7-16.93z"/></svg>
<div class="pb g" style="left:1000px;top:682px;width:38px"></div>
<svg class="abs" style="left:1009.08px;top:689.20px" width="15.25" height="12.20" viewBox="0 0 640 512"><path fill="#fff" d="M189.61 310.58c3.54 3.26 15.27 9.42 34.39 9.420s30.860-6.160 34.390-9.420c16.020-14.770 34.500-22.580 53.460-22.580h16.300c18.960 0 37.450 7.810 53.460 22.580 3.540 3.260 15.270 9.420 34.390 9.420s30.860-6.160 34.390-9.420c14.860-13.710 31.880-21.120 49.390-22.160l-112.840-80.600 18-12.860c3.640-2.580 8.280-3.520 12.620-2.610l100.350 21.530c25.910 5.530 51.440-10.970 57-36.880 5.550-25.920-10.950-51.440-36.880-57L437.680 98.470c-30.730-6.580-63.020.12-88.560 18.380l-80.020 57.170c-10.380 7.390-19.360 16.440-26.720 26.940L173.750 299c5.470 3.230 10.820 6.930 15.860 11.580zM624 352h-16c-26.040 0-45.800-8.420-56.090-17.900-8.900-8.210-19.660-14.100-31.770-14.100h-16.300c-12.110 0-22.870 5.890-31.770 14.100C461.800 343.580 442.040 352 416 352s-45.800-8.420-56.090-17.900c-8.900-8.210-19.660-14.100-31.770-14.100h-16.300c-12.110 0-22.870 5.890-31.770 14.100C269.800 343.580 250.040 352 224 352s-45.800-8.420-56.090-17.900c-8.900-8.210-19.660-14.100-31.770-14.100h-16.300c-12.110 0-22.870 5.890-31.770 14.100C77.800 343.580 58.040 352 32 352H16c-8.840 0-16 7.160-16 16v32c0 8.840 7.160 16 16 16h16c38.620 0 72.720-12.190 96-31.840 23.280 19.660 57.380 31.840 96 31.840s72.720-12.190 96-31.840c23.280 19.660 57.380 31.840 96 31.840s72.720-12.190 96-31.840c23.280 19.660 57.380 31.840 96 31.840h16c8.840 0 16-7.160 16-16v-32c0-8.840-7.160-16-16-16zm-512-96c44.180 0 80-35.820 80-80s-35.820-80-80-80-80 35.820-80 80 35.820 80 80 80z"/></svg>
<div class="t" style="left:1024.600px;top:689.6px;font-size:12px;line-height:12px;color:#fff;letter-spacing:-.3px">1</div>
<div class="cb" style="top:744.7px"></div>
<svg class="abs" style="left:1231px;top:747.7px" width="14" height="14" viewBox="0 0 14 14"><path d="M2.900,2.900L11.100,11.100M11.100,2.900L2.900,11.100" stroke="#2c3340" stroke-width="2.500" stroke-linecap="round" fill="none"/></svg>
<div class="pb g" style="left:930px;top:742px;width:30px"></div>
<svg class="abs" style="left:938.70px;top:749.30px" width="12.60" height="12.60" viewBox="0 0 512 512"><path fill="#fff" d="M488 128h-8V80c0-44.8-99.2-80-224-80S32 35.2 32 80v48h-8c-13.25 0-24 10.74-24 24v80c0 13.25 10.75 24 24 24h8v160c0 17.67 14.33 32 32 32v32c0 17.67 14.33 32 32 32h32c17.67 0 32-14.33 32-32v-32h192v32c0 17.67 14.33 32 32 32h32c17.67 0 32-14.33 32-32v-32h6.4c16 0 25.6-12.8 25.6-25.6V256h8c13.25 0 24-10.75 24-24v-80c0-13.26-10.75-24-24-24zM112 400c-17.67 0-32-14.33-32-32s14.33-32 32-32 32 14.33 32 32-14.33 32-32 32zm16-112c-17.67 0-32-14.33-32-32V128c0-17.67 14.33-32 32-32h256c17.67 0 32 14.33 32 32v128c0 17.67-14.33 32-32 32H128zm272 112c-17.67 0-32-14.33-32-32s14.33-32 32-32 32 14.33 32 32-14.33 32-32 32z"/></svg>
<div class="pb w" style="left:964px;top:742px;width:32px"></div>
<svg class="abs" style="left:973.24px;top:749.10px" width="13.72" height="12.20" viewBox="0 0 576 512"><path fill="#2c3340" d="M280.37 148.26L96 300.11V464a16 16 0 0 0 16 16l112.06-.29a16 16 0 0 0 15.92-16V368a16 16 0 0 1 16-16h64a16 16 0 0 1 16 16v95.64a16 16 0 0 0 16 16.05L464 480a16 16 0 0 0 16-16V300L295.67 148.26a12.19 12.19 0 0 0-15.3 0zM571.6 251.47L488 182.56V44.05a12 12 0 0 0-12-12h-56a12 12 0 0 0-12 12v72.61L318.47 43a48 48 0 0 0-61 0L4.34 251.47a12 12 0 0 0-1.6 16.9l25.5 31A12 12 0 0 0 45.15 301l235.22-193.74a12.19 12.19 0 0 1 15.3 0L530.9 301a12 12 0 0 0 16.9-1.6l25.5-31a12 12 0 0 0-1.7-16.93z"/></svg>
<div class="pb g" style="left:1000px;top:742px;width:38px"></div>
<svg class="abs" style="left:1009.08px;top:749.20px" width="15.25" height="12.20" viewBox="0 0 640 512"><path fill="#fff" d="M189.61 310.58c3.54 3.26 15.27 9.42 34.39 9.420s30.860-6.160 34.390-9.420c16.020-14.770 34.500-22.580 53.460-22.580h16.300c18.960 0 37.450 7.810 53.460 22.580 3.540 3.260 15.270 9.420 34.390 9.420s30.860-6.160 34.390-9.420c14.860-13.710 31.880-21.120 49.390-22.160l-112.840-80.600 18-12.860c3.640-2.580 8.280-3.520 12.620-2.610l100.350 21.530c25.910 5.530 51.440-10.970 57-36.880 5.550-25.920-10.950-51.440-36.880-57L437.680 98.470c-30.730-6.580-63.020.12-88.560 18.380l-80.020 57.170c-10.380 7.390-19.360 16.440-26.720 26.940L173.750 299c5.470 3.230 10.820 6.930 15.860 11.580zM624 352h-16c-26.040 0-45.800-8.420-56.090-17.900-8.900-8.210-19.660-14.100-31.770-14.100h-16.300c-12.110 0-22.870 5.890-31.770 14.100C461.800 343.580 442.040 352 416 352s-45.800-8.420-56.090-17.900c-8.900-8.210-19.660-14.100-31.770-14.100h-16.300c-12.110 0-22.870 5.890-31.770 14.100C269.800 343.580 250.040 352 224 352s-45.800-8.420-56.090-17.900c-8.900-8.210-19.660-14.100-31.770-14.100h-16.300c-12.110 0-22.870 5.890-31.770 14.100C77.800 343.580 58.040 352 32 352H16c-8.840 0-16 7.160-16 16v32c0 8.840 7.160 16 16 16h16c38.620 0 72.720-12.190 96-31.840 23.280 19.660 57.380 31.840 96 31.840s72.720-12.190 96-31.840c23.280 19.660 57.380 31.840 96 31.840s72.720-12.190 96-31.840c23.280 19.660 57.380 31.840 96 31.840h16c8.840 0 16-7.160 16-16v-32c0-8.840-7.160-16-16-16zm-512-96c44.180 0 80-35.820 80-80s-35.820-80-80-80-80 35.820-80 80 35.820 80 80 80z"/></svg>
<div class="t" style="left:1024.600px;top:749.6px;font-size:12px;line-height:12px;color:#fff;letter-spacing:-.3px">1</div>
<div class="cb" style="top:804.7px"></div>
<svg class="abs" style="left:1231px;top:807.7px" width="14" height="14" viewBox="0 0 14 14"><path d="M2.900,2.900L11.100,11.100M11.100,2.900L2.900,11.100" stroke="#2c3340" stroke-width="2.500" stroke-linecap="round" fill="none"/></svg>
<div class="pb g" style="left:930px;top:802px;width:30px"></div>
<svg class="abs" style="left:938.70px;top:809.30px" width="12.60" height="12.60" viewBox="0 0 512 512"><path fill="#fff" d="M488 128h-8V80c0-44.8-99.2-80-224-80S32 35.2 32 80v48h-8c-13.25 0-24 10.74-24 24v80c0 13.25 10.75 24 24 24h8v160c0 17.67 14.33 32 32 32v32c0 17.67 14.33 32 32 32h32c17.67 0 32-14.33 32-32v-32h192v32c0 17.67 14.33 32 32 32h32c17.67 0 32-14.33 32-32v-32h6.4c16 0 25.6-12.8 25.6-25.6V256h8c13.25 0 24-10.75 24-24v-80c0-13.26-10.75-24-24-24zM112 400c-17.67 0-32-14.33-32-32s14.33-32 32-32 32 14.33 32 32-14.33 32-32 32zm16-112c-17.67 0-32-14.33-32-32V128c0-17.67 14.33-32 32-32h256c17.67 0 32 14.33 32 32v128c0 17.67-14.33 32-32 32H128zm272 112c-17.67 0-32-14.33-32-32s14.33-32 32-32 32 14.33 32 32-14.33 32-32 32z"/></svg>
<div class="pb w" style="left:964px;top:802px;width:32px"></div>
<svg class="abs" style="left:973.24px;top:809.10px" width="13.72" height="12.20" viewBox="0 0 576 512"><path fill="#2c3340" d="M280.37 148.26L96 300.11V464a16 16 0 0 0 16 16l112.06-.29a16 16 0 0 0 15.92-16V368a16 16 0 0 1 16-16h64a16 16 0 0 1 16 16v95.64a16 16 0 0 0 16 16.05L464 480a16 16 0 0 0 16-16V300L295.67 148.26a12.19 12.19 0 0 0-15.3 0zM571.6 251.47L488 182.56V44.05a12 12 0 0 0-12-12h-56a12 12 0 0 0-12 12v72.61L318.47 43a48 48 0 0 0-61 0L4.34 251.47a12 12 0 0 0-1.6 16.9l25.5 31A12 12 0 0 0 45.15 301l235.22-193.74a12.19 12.19 0 0 1 15.3 0L530.9 301a12 12 0 0 0 16.9-1.6l25.5-31a12 12 0 0 0-1.7-16.93z"/></svg>
<div class="pb w" style="left:1000px;top:802px;width:40px"></div>
<svg class="abs" style="left:1009.08px;top:809.20px" width="15.25" height="12.20" viewBox="0 0 640 512"><path fill="#2c3340" d="M189.61 310.58c3.54 3.26 15.27 9.42 34.39 9.420s30.860-6.160 34.390-9.420c16.020-14.770 34.500-22.580 53.460-22.580h16.300c18.960 0 37.450 7.810 53.460 22.580 3.540 3.260 15.270 9.420 34.390 9.420s30.860-6.160 34.390-9.420c14.860-13.710 31.880-21.120 49.390-22.160l-112.840-80.600 18-12.860c3.640-2.580 8.280-3.520 12.620-2.610l100.350 21.530c25.910 5.530 51.440-10.970 57-36.880 5.550-25.920-10.950-51.440-36.880-57L437.680 98.470c-30.730-6.580-63.020.12-88.560 18.380l-80.020 57.170c-10.380 7.390-19.360 16.440-26.720 26.940L173.750 299c5.470 3.230 10.820 6.930 15.860 11.580zM624 352h-16c-26.040 0-45.800-8.420-56.090-17.900-8.900-8.210-19.660-14.100-31.770-14.100h-16.300c-12.110 0-22.870 5.890-31.770 14.100C461.800 343.580 442.040 352 416 352s-45.800-8.420-56.090-17.900c-8.900-8.210-19.660-14.100-31.770-14.100h-16.300c-12.110 0-22.870 5.890-31.770 14.100C269.800 343.580 250.040 352 224 352s-45.800-8.420-56.090-17.900c-8.900-8.210-19.660-14.100-31.770-14.100h-16.300c-12.110 0-22.870 5.890-31.770 14.100C77.800 343.580 58.040 352 32 352H16c-8.840 0-16 7.160-16 16v32c0 8.840 7.160 16 16 16h16c38.620 0 72.720-12.190 96-31.840 23.280 19.660 57.380 31.840 96 31.840s72.720-12.190 96-31.840c23.280 19.660 57.380 31.840 96 31.840s72.720-12.190 96-31.840c23.280 19.660 57.380 31.840 96 31.840h16c8.840 0 16-7.160 16-16v-32c0-8.840-7.160-16-16-16zm-512-96c44.180 0 80-35.820 80-80s-35.820-80-80-80-80 35.820-80 80 35.820 80 80 80z"/></svg>
<div class="t" style="left:1024.600px;top:809.6px;font-size:12px;line-height:12px;color:#2c3340;letter-spacing:-.3px">0</div>
<div class="abs" style="left:962px;top:323px;width:34px;height:34px;border-radius:50%;background:#1e66c8;box-shadow:0 3px 6px rgba(0,0,0,.33)"></div>
<svg class="abs" style="left:962px;top:323px" width="34" height="34" viewBox="-17 -17 34 34"><g stroke="#fff" stroke-width="3.700"><path d="M0,-9.900V9.900"/><path d="M0,-9.900V9.900" transform="rotate(60)"/><path d="M0,-9.900V9.900" transform="rotate(-60)"/></g></svg>
<div class="abs" style="left:113px;top:853px;width:123px;height:39px;border:1px solid #d9d8e4;border-radius:5px;background:#fefefe;overflow:hidden"><div style="position:absolute;left:0;top:0;width:32px;height:37px;background:#f7f7fb;border-right:1px solid #d9d8e4"></div><div style="position:absolute;left:71px;top:0;width:1px;height:37px;background:#d9d8e4"></div></div>
<div class="t" style="left:124.20px;top:19px;font-size:23px;line-height:23px;color:#0e0e16;letter-spacing:0.026px;font-weight:700">Registrants</div>
<div class="t" style="left:124.20px;top:50px;font-size:12.2px;line-height:12.2px;color:#1a73c8;letter-spacing:-0.177px">Home</div>
<div class="t" style="left:170.80px;top:50px;font-size:12.2px;line-height:12.2px;color:#1a73c8;letter-spacing:-0.497px">Summer Camp</div>
<div class="t" style="left:263.00px;top:50px;font-size:12.2px;line-height:12.2px;color:#1a1a24;letter-spacing:-0.364px">Summer Camp 2025</div>
<div class="t" style="left:637.60px;top:33px;font-size:14px;line-height:14px;color:#3a3a48;letter-spacing:-0.186px">Name</div>
<div class="t" style="left:1150.80px;top:33px;font-size:15.4px;line-height:15.4px;color:#2f3340;letter-spacing:0.168px;-webkit-text-stroke:0.45px #2f3340">Alisha</div>
<div class="t" style="left:119.90px;top:157px;font-size:16px;line-height:16px;color:#1a73c8;letter-spacing:-0.156px">Registrations</div>
<div class="t" style="left:244.75px;top:157px;font-size:16px;line-height:16px;color:#3f3f4c;letter-spacing:-0.317px">Registrants</div>
<div class="t" style="left:356.70px;top:157px;font-size:16px;line-height:16px;color:#1a73c8;letter-spacing:-0.492px">Payments</div>
<div class="t" style="left:458.70px;top:157px;font-size:16px;line-height:16px;color:#1a73c8;letter-spacing:-1.290px">Fees</div>
<div class="t" style="left:524.00px;top:157px;font-size:16px;line-height:16px;color:#1a73c8;letter-spacing:-0.144px">Discounts</div>
<div class="t" style="left:627.20px;top:157px;font-size:16px;line-height:16px;color:#1a73c8;letter-spacing:-0.450px">Linkages</div>
<div class="t" style="left:121.00px;top:222px;font-size:18px;line-height:18px;color:#12121a;letter-spacing:0.016px;-webkit-text-stroke:0.6px #12121a">Registrants</div>
<div class="t" style="left:127.60px;top:268px;font-size:12.3px;line-height:12.3px;color:#8886a3;letter-spacing:-0.075px">Filter Options</div>
<div class="t" style="left:176.40px;top:308px;font-size:14px;line-height:14px;color:#12121a;letter-spacing:0.187px;-webkit-text-stroke:0.5px #12121a">Registrant</div>
<div class="t" style="left:463.00px;top:309px;font-size:14px;line-height:14px;color:#12121a;letter-spacing:0.094px;-webkit-text-stroke:0.5px #12121a">Group</div>
<div class="t" style="left:573.25px;top:309px;font-size:14px;line-height:14px;color:#12121a;letter-spacing:-0.875px;-webkit-text-stroke:0.5px #12121a">Fees</div>
<div class="t" style="left:929.30px;top:309px;font-size:14px;line-height:14px;color:#12121a;letter-spacing:-0.005px;-webkit-text-stroke:0.5px #12121a">Placements</div>
<div class="t" style="left:122.50px;top:867px;font-size:13.6px;line-height:13.6px;color:#55555f;letter-spacing:-1.060px">50</div>
<div class="t" style="left:154.50px;top:867px;font-size:13.6px;line-height:13.6px;color:#1c1c26;letter-spacing:-0.435px">500</div>
<div class="t" style="left:194.50px;top:867px;font-size:13.6px;line-height:13.6px;color:#1c1c26;letter-spacing:-0.489px">5,000</div>
<div class="t" style="left:254.25px;top:866px;font-size:13.6px;line-height:13.6px;color:#1c1c26;letter-spacing:-0.112px">8 Registrants</div>
<div class="t" style="left:176.70px;top:365px;font-size:15.8px;line-height:15.8px;color:#4b4b58;letter-spacing:-0.143px">Decker, Alex</div>
<div class="t" style="left:574.00px;top:365px;font-size:15.8px;line-height:15.8px;color:#4b4b58;letter-spacing:-0.249px">Camp Shirt ($10.00)</div>
<div class="t" style="left:176.70px;top:425px;font-size:15.8px;line-height:15.8px;color:#4b4b58;letter-spacing:-0.136px">Decker, Cindy</div>
<div class="t" style="left:574.00px;top:425px;font-size:15.8px;line-height:15.8px;color:#4b4b58;letter-spacing:-0.249px">Camp Shirt ($10.00)</div>
<div class="t" style="left:176.70px;top:485px;font-size:15.8px;line-height:15.8px;color:#14141c;letter-spacing:0.044px">Decker, Noah</div>
<div class="t" style="left:176.70px;top:545px;font-size:15.8px;line-height:15.8px;color:#4b4b58;letter-spacing:-0.143px">Decker, Ted</div>
<div class="t" style="left:574.00px;top:545px;font-size:15.8px;line-height:15.8px;color:#4b4b58;letter-spacing:-0.249px">Camp Shirt ($10.00)</div>
<div class="t" style="left:177.00px;top:605px;font-size:15.8px;line-height:15.8px;color:#4b4b58;letter-spacing:-0.215px">Greggs, Jordan</div>
<div class="t" style="left:574.00px;top:605px;font-size:15.8px;line-height:15.8px;color:#4b4b58;letter-spacing:-0.249px">Camp Shirt ($10.00)</div>
<div class="t" style="left:574.00px;top:629px;font-size:15.8px;line-height:15.8px;color:#4b4b58;letter-spacing:-0.368px">Coffee Fee ($10.00)</div>
<div class="t" style="left:177.00px;top:686px;font-size:15.8px;line-height:15.8px;color:#4b4b58;letter-spacing:-0.195px">Greggs, Tim</div>
<div class="t" style="left:574.00px;top:686px;font-size:15.8px;line-height:15.8px;color:#4b4b58;letter-spacing:-0.249px">Camp Shirt ($10.00)</div>
<div class="t" style="left:177.00px;top:746px;font-size:15.8px;line-height:15.8px;color:#4b4b58;letter-spacing:-0.402px">Jones, Brian</div>
<div class="t" style="left:176.80px;top:806px;font-size:15.8px;line-height:15.8px;color:#4b4b58;letter-spacing:-0.033px">Lowe, Maddie</div>
<div class="abs" style="left:0;top:954px;width:6px;height:6px;background:radial-gradient(circle at 100% 0%,rgba(42,60,36,0) 4.1px,#2a3c24 5.3px)"></div>
<div class="abs" style="left:1274px;top:954px;width:6px;height:6px;background:radial-gradient(circle at 0% 0%,rgba(120,105,96,0) 4.1px,#78695f 5.3px)"></div>
</body>
</html>
